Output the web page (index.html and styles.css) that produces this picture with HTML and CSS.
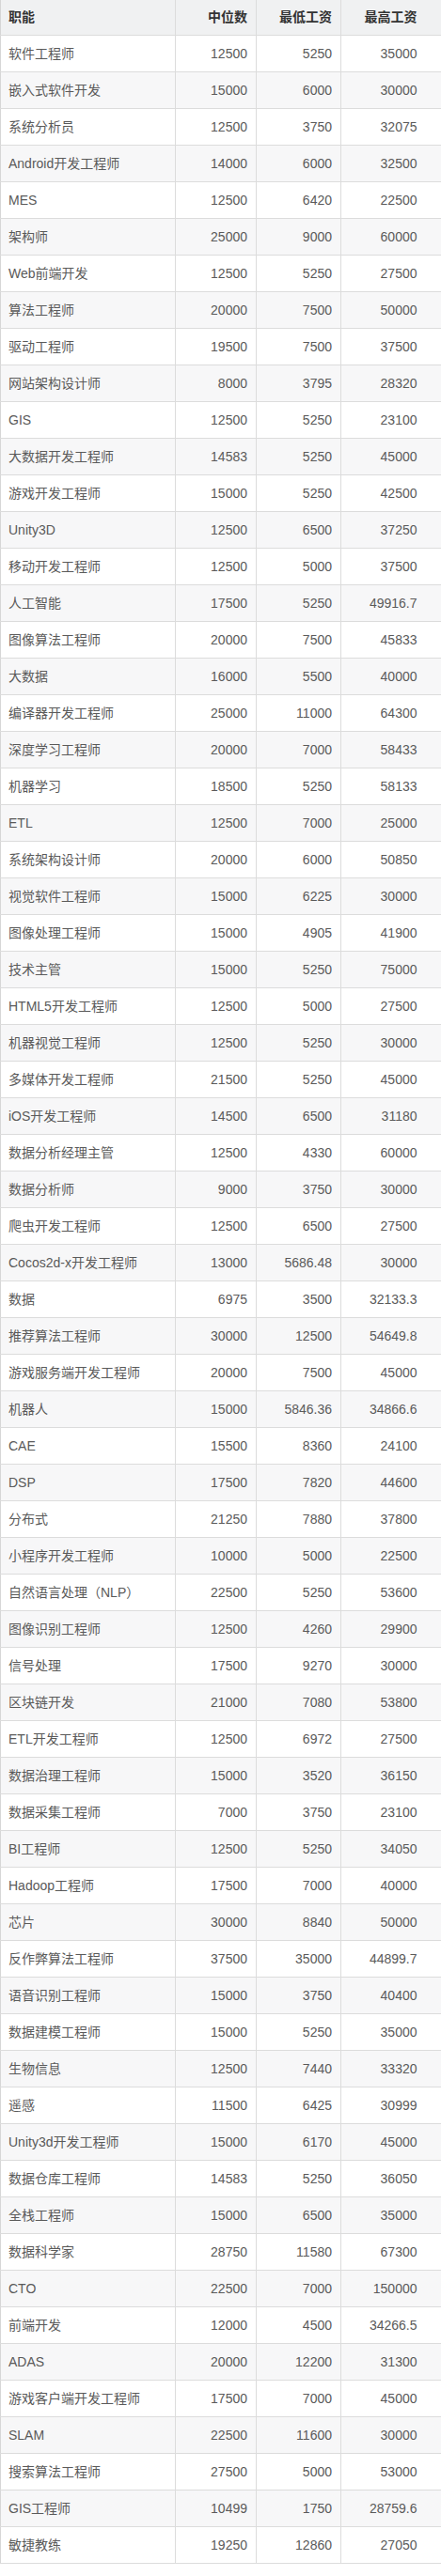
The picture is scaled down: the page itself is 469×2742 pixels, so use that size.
FILE: index.html
```html
<!DOCTYPE html>
<html lang="zh-CN">
<head>
<meta charset="utf-8">
<title>职能工资表</title>
<link rel="stylesheet" href="styles.css">
</head>
<body>
<table class="salary">
<colgroup>
<col class="c-name"><col class="c-mid"><col class="c-min"><col class="c-max">
</colgroup>
<thead>
<tr><th class="name">职能</th><th>中位数</th><th>最低工资</th><th class="last">最高工资</th></tr>
</thead>
<tbody>
<tr><td class="name">软件工程师</td><td>12500</td><td>5250</td><td class="last">35000</td></tr>
<tr><td class="name">嵌入式软件开发</td><td>15000</td><td>6000</td><td class="last">30000</td></tr>
<tr><td class="name">系统分析员</td><td>12500</td><td>3750</td><td class="last">32075</td></tr>
<tr><td class="name">Android开发工程师</td><td>14000</td><td>6000</td><td class="last">32500</td></tr>
<tr><td class="name">MES</td><td>12500</td><td>6420</td><td class="last">22500</td></tr>
<tr><td class="name">架构师</td><td>25000</td><td>9000</td><td class="last">60000</td></tr>
<tr><td class="name">Web前端开发</td><td>12500</td><td>5250</td><td class="last">27500</td></tr>
<tr><td class="name">算法工程师</td><td>20000</td><td>7500</td><td class="last">50000</td></tr>
<tr><td class="name">驱动工程师</td><td>19500</td><td>7500</td><td class="last">37500</td></tr>
<tr><td class="name">网站架构设计师</td><td>8000</td><td>3795</td><td class="last">28320</td></tr>
<tr><td class="name">GIS</td><td>12500</td><td>5250</td><td class="last">23100</td></tr>
<tr><td class="name">大数据开发工程师</td><td>14583</td><td>5250</td><td class="last">45000</td></tr>
<tr><td class="name">游戏开发工程师</td><td>15000</td><td>5250</td><td class="last">42500</td></tr>
<tr><td class="name">Unity3D</td><td>12500</td><td>6500</td><td class="last">37250</td></tr>
<tr><td class="name">移动开发工程师</td><td>12500</td><td>5000</td><td class="last">37500</td></tr>
<tr><td class="name">人工智能</td><td>17500</td><td>5250</td><td class="last">49916.7</td></tr>
<tr><td class="name">图像算法工程师</td><td>20000</td><td>7500</td><td class="last">45833</td></tr>
<tr><td class="name">大数据</td><td>16000</td><td>5500</td><td class="last">40000</td></tr>
<tr><td class="name">编译器开发工程师</td><td>25000</td><td>11000</td><td class="last">64300</td></tr>
<tr><td class="name">深度学习工程师</td><td>20000</td><td>7000</td><td class="last">58433</td></tr>
<tr><td class="name">机器学习</td><td>18500</td><td>5250</td><td class="last">58133</td></tr>
<tr><td class="name">ETL</td><td>12500</td><td>7000</td><td class="last">25000</td></tr>
<tr><td class="name">系统架构设计师</td><td>20000</td><td>6000</td><td class="last">50850</td></tr>
<tr><td class="name">视觉软件工程师</td><td>15000</td><td>6225</td><td class="last">30000</td></tr>
<tr><td class="name">图像处理工程师</td><td>15000</td><td>4905</td><td class="last">41900</td></tr>
<tr><td class="name">技术主管</td><td>15000</td><td>5250</td><td class="last">75000</td></tr>
<tr><td class="name">HTML5开发工程师</td><td>12500</td><td>5000</td><td class="last">27500</td></tr>
<tr><td class="name">机器视觉工程师</td><td>12500</td><td>5250</td><td class="last">30000</td></tr>
<tr><td class="name">多媒体开发工程师</td><td>21500</td><td>5250</td><td class="last">45000</td></tr>
<tr><td class="name">iOS开发工程师</td><td>14500</td><td>6500</td><td class="last">31180</td></tr>
<tr><td class="name">数据分析经理主管</td><td>12500</td><td>4330</td><td class="last">60000</td></tr>
<tr><td class="name">数据分析师</td><td>9000</td><td>3750</td><td class="last">30000</td></tr>
<tr><td class="name">爬虫开发工程师</td><td>12500</td><td>6500</td><td class="last">27500</td></tr>
<tr><td class="name">Cocos2d-x开发工程师</td><td>13000</td><td>5686.48</td><td class="last">30000</td></tr>
<tr><td class="name">数据</td><td>6975</td><td>3500</td><td class="last">32133.3</td></tr>
<tr><td class="name">推荐算法工程师</td><td>30000</td><td>12500</td><td class="last">54649.8</td></tr>
<tr><td class="name">游戏服务端开发工程师</td><td>20000</td><td>7500</td><td class="last">45000</td></tr>
<tr><td class="name">机器人</td><td>15000</td><td>5846.36</td><td class="last">34866.6</td></tr>
<tr><td class="name">CAE</td><td>15500</td><td>8360</td><td class="last">24100</td></tr>
<tr><td class="name">DSP</td><td>17500</td><td>7820</td><td class="last">44600</td></tr>
<tr><td class="name">分布式</td><td>21250</td><td>7880</td><td class="last">37800</td></tr>
<tr><td class="name">小程序开发工程师</td><td>10000</td><td>5000</td><td class="last">22500</td></tr>
<tr><td class="name">自然语言处理（NLP）</td><td>22500</td><td>5250</td><td class="last">53600</td></tr>
<tr><td class="name">图像识别工程师</td><td>12500</td><td>4260</td><td class="last">29900</td></tr>
<tr><td class="name">信号处理</td><td>17500</td><td>9270</td><td class="last">30000</td></tr>
<tr><td class="name">区块链开发</td><td>21000</td><td>7080</td><td class="last">53800</td></tr>
<tr><td class="name">ETL开发工程师</td><td>12500</td><td>6972</td><td class="last">27500</td></tr>
<tr><td class="name">数据治理工程师</td><td>15000</td><td>3520</td><td class="last">36150</td></tr>
<tr><td class="name">数据采集工程师</td><td>7000</td><td>3750</td><td class="last">23100</td></tr>
<tr><td class="name">BI工程师</td><td>12500</td><td>5250</td><td class="last">34050</td></tr>
<tr><td class="name">Hadoop工程师</td><td>17500</td><td>7000</td><td class="last">40000</td></tr>
<tr><td class="name">芯片</td><td>30000</td><td>8840</td><td class="last">50000</td></tr>
<tr><td class="name">反作弊算法工程师</td><td>37500</td><td>35000</td><td class="last">44899.7</td></tr>
<tr><td class="name">语音识别工程师</td><td>15000</td><td>3750</td><td class="last">40400</td></tr>
<tr><td class="name">数据建模工程师</td><td>15000</td><td>5250</td><td class="last">35000</td></tr>
<tr><td class="name">生物信息</td><td>12500</td><td>7440</td><td class="last">33320</td></tr>
<tr><td class="name">遥感</td><td>11500</td><td>6425</td><td class="last">30999</td></tr>
<tr><td class="name">Unity3d开发工程师</td><td>15000</td><td>6170</td><td class="last">45000</td></tr>
<tr><td class="name">数据仓库工程师</td><td>14583</td><td>5250</td><td class="last">36050</td></tr>
<tr><td class="name">全栈工程师</td><td>15000</td><td>6500</td><td class="last">35000</td></tr>
<tr><td class="name">数据科学家</td><td>28750</td><td>11580</td><td class="last">67300</td></tr>
<tr><td class="name">CTO</td><td>22500</td><td>7000</td><td class="last">150000</td></tr>
<tr><td class="name">前端开发</td><td>12000</td><td>4500</td><td class="last">34266.5</td></tr>
<tr><td class="name">ADAS</td><td>20000</td><td>12200</td><td class="last">31300</td></tr>
<tr><td class="name">游戏客户端开发工程师</td><td>17500</td><td>7000</td><td class="last">45000</td></tr>
<tr><td class="name">SLAM</td><td>22500</td><td>11600</td><td class="last">30000</td></tr>
<tr><td class="name">搜索算法工程师</td><td>27500</td><td>5000</td><td class="last">53000</td></tr>
<tr><td class="name">GIS工程师</td><td>10499</td><td>1750</td><td class="last">28759.6</td></tr>
<tr><td class="name">敏捷教练</td><td>19250</td><td>12860</td><td class="last">27050</td></tr>
</tbody>
</table>
</body>
</html>
```

FILE: styles.css
```css
html, body {
  margin: 0;
  padding: 0;
  background: #ffffff;
}

body {
  font-family: "Liberation Sans", "Noto Sans CJK SC", sans-serif;
  font-size: 14px;
  color: #5a5a5a;
}

.salary {
  width: 469px;
  border-collapse: collapse;
  table-layout: fixed;
}

.c-name { width: 186px; }
.c-mid { width: 86px; }
.c-min { width: 90px; }
.c-max { width: 107px; }

.salary th,
.salary td {
  border: 1px solid #dcdcdc;
  line-height: 20px;
  text-align: right;
  padding: 9px 9px 9px 8px;
  white-space: nowrap;
  overflow: hidden;
}

.salary th {
  background: #f0f1f2;
  color: #333333;
  font-weight: bold;
  padding-top: 8px;
  padding-bottom: 9px;
  border-top: none;
}

.salary .name {
  text-align: left;
  border-left: 1px solid #d6d6d6;
}

.salary .last {
  padding-right: 26px;
  border-right: none;
}

.salary tbody tr:nth-child(even) td {
  background: #f7f7f8;
}
```
